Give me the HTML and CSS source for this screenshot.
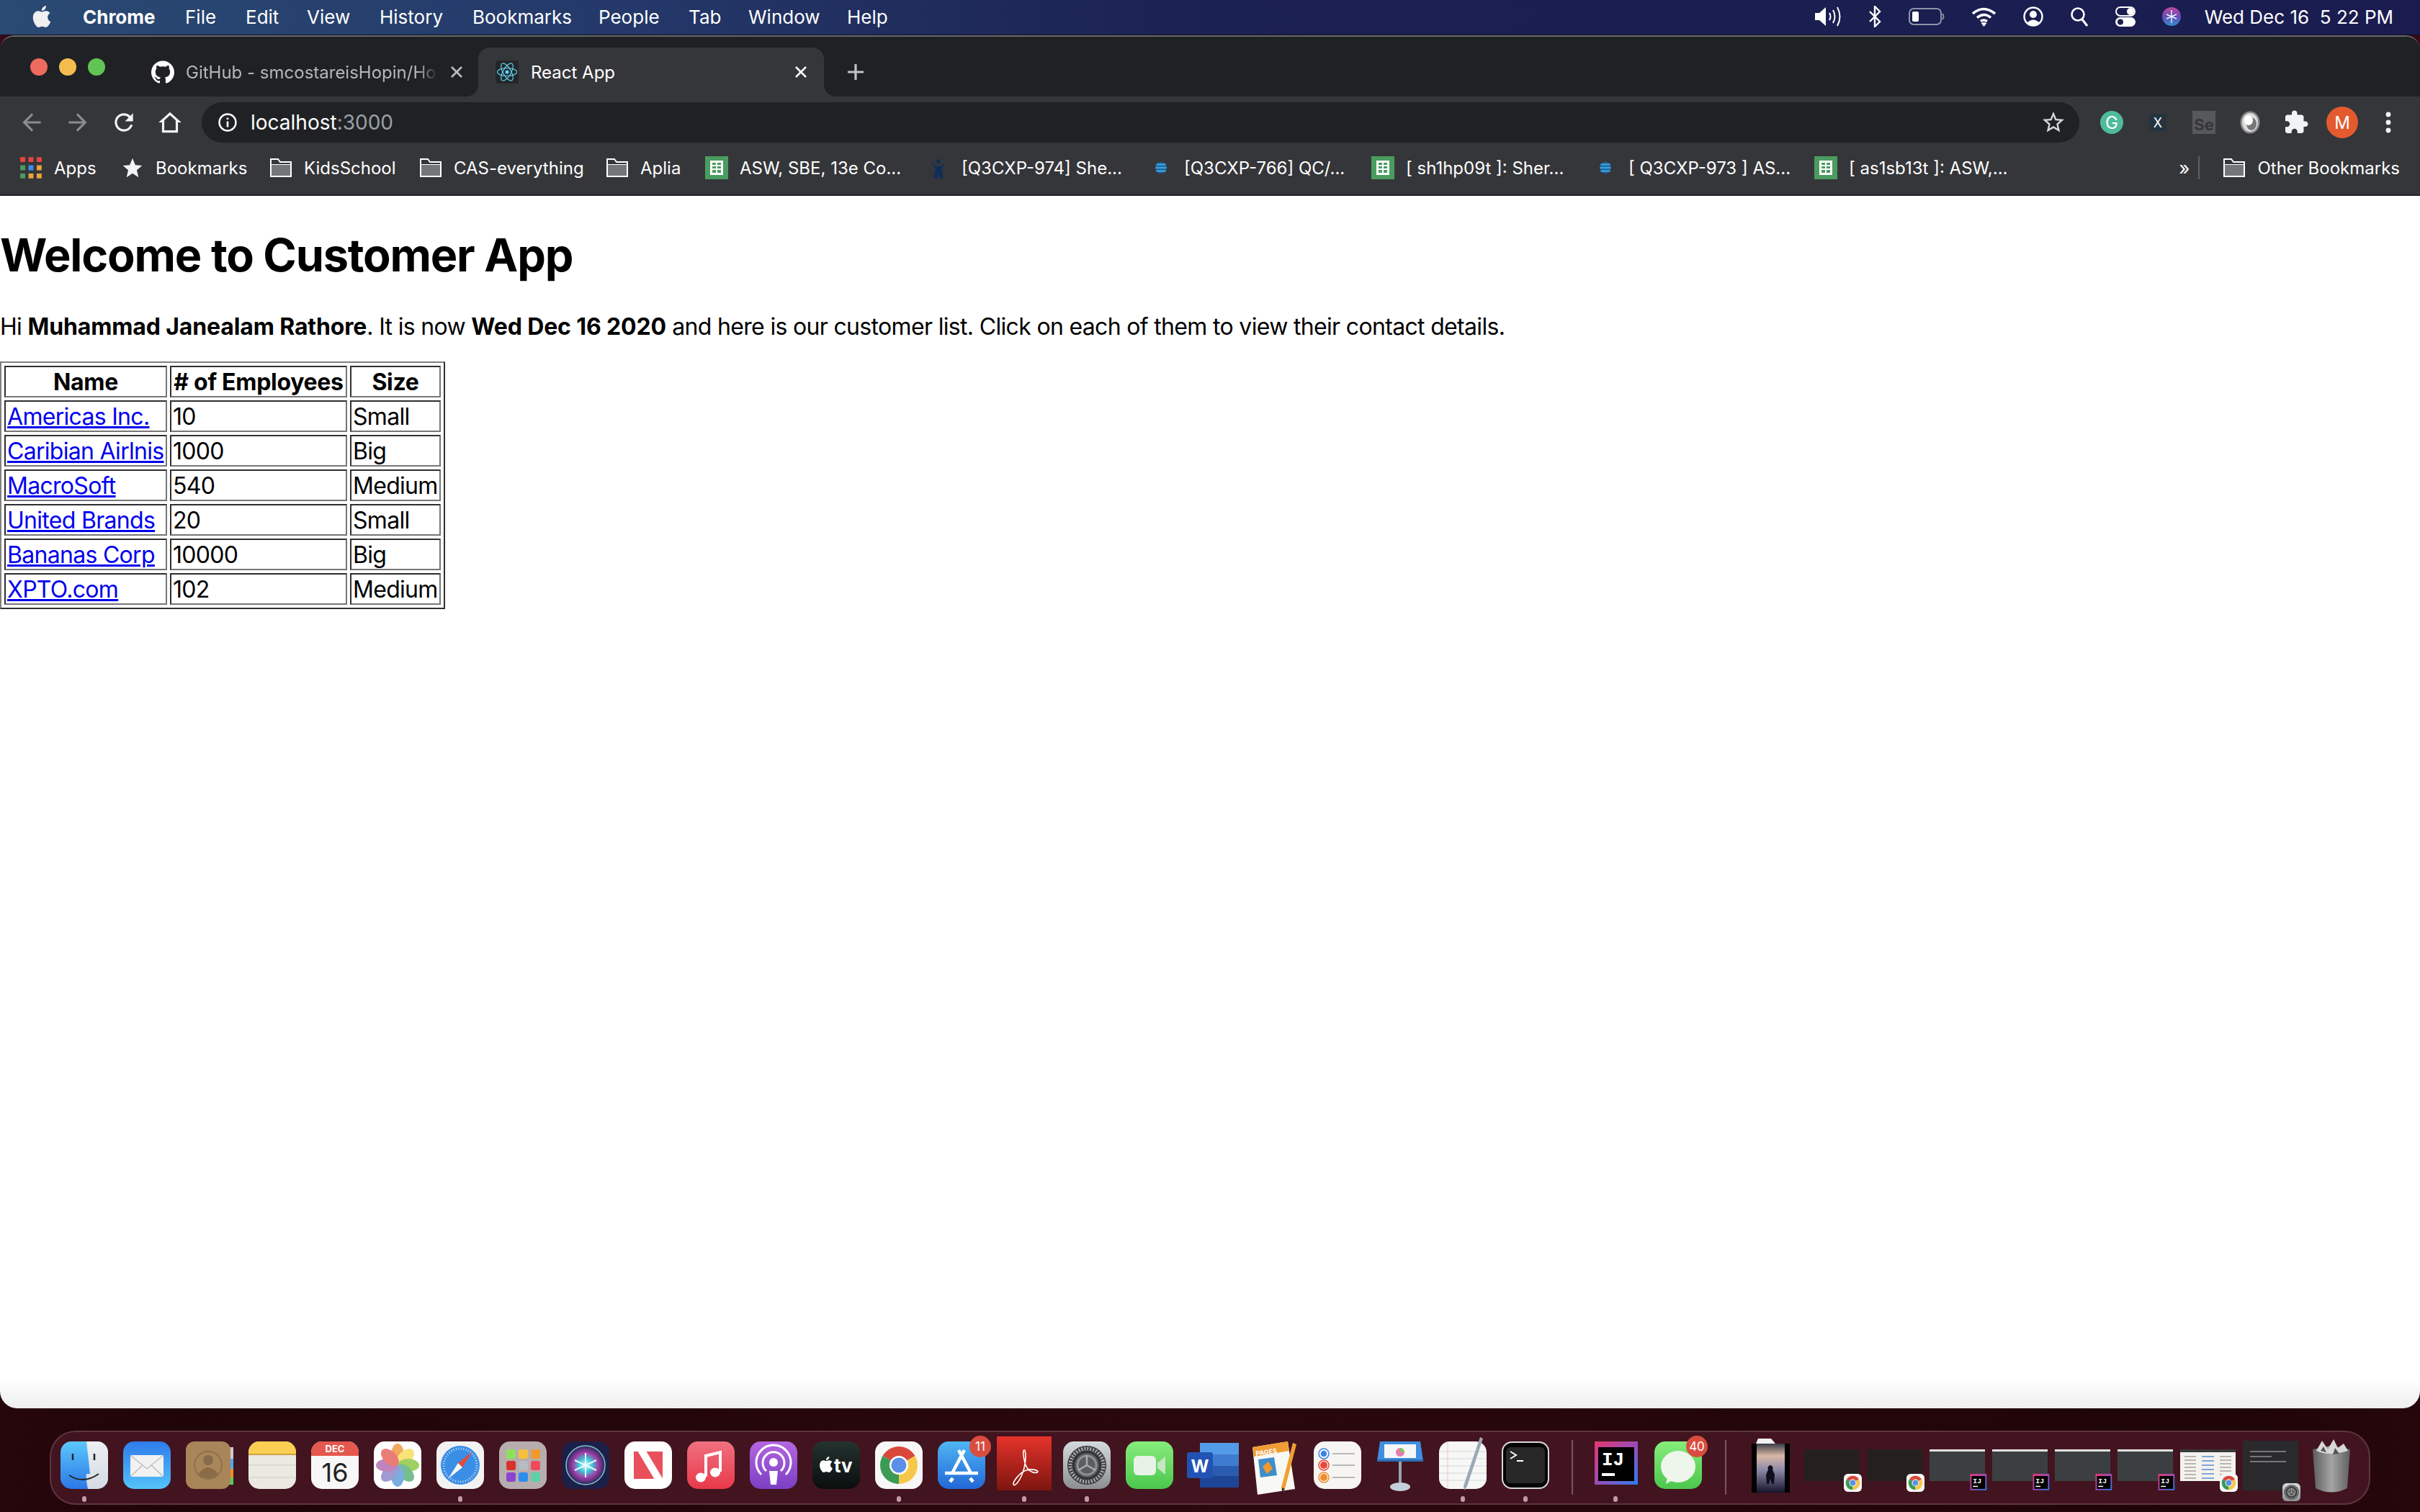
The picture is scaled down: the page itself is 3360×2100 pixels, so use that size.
FILE: index.html
```html
<!DOCTYPE html>
<html lang="en">

<head>
    <meta charset="UTF-8">
    <title>React App</title>
    <link rel="stylesheet" href="styles.css">
</head>

<body>
    <svg class="defs" aria-hidden="true">
        <defs>
            <linearGradient id="gFinder" x1="0" y1="0" x2="0" y2="1"><stop offset="0" stop-color="#5ac8fa"/><stop offset="1" stop-color="#2c78e8"/></linearGradient>
            <linearGradient id="gFinder2" x1="0" y1="0" x2="0" y2="1"><stop offset="0" stop-color="#eef0f3"/><stop offset="1" stop-color="#d4dbe4"/></linearGradient>
            <linearGradient id="gMail" x1="0" y1="0" x2="0" y2="1"><stop offset="0" stop-color="#2f7bea"/><stop offset="1" stop-color="#54c3fa"/></linearGradient>
            <linearGradient id="gMusic" x1="0" y1="0" x2="0" y2="1"><stop offset="0" stop-color="#f0717f"/><stop offset="1" stop-color="#e8394a"/></linearGradient>
            <linearGradient id="gPod" x1="0" y1="0" x2="0" y2="1"><stop offset="0" stop-color="#b566e0"/><stop offset="1" stop-color="#7b3fc4"/></linearGradient>
            <linearGradient id="gStore" x1="0" y1="0" x2="0" y2="1"><stop offset="0" stop-color="#4fb5f3"/><stop offset="1" stop-color="#2268d8"/></linearGradient>
            <linearGradient id="gAcro" x1="0" y1="0" x2="0" y2="1"><stop offset="0" stop-color="#e5332a"/><stop offset="1" stop-color="#7d1510"/></linearGradient>
            <linearGradient id="gPrefs" x1="0" y1="0" x2="0" y2="1"><stop offset="0" stop-color="#d3dade"/><stop offset="1" stop-color="#8b8f92"/></linearGradient>
            <linearGradient id="gFace" x1="0" y1="0" x2="0" y2="1"><stop offset="0" stop-color="#86ec7c"/><stop offset="1" stop-color="#4cc74c"/></linearGradient>
            <linearGradient id="gTv" x1="0" y1="0" x2="0" y2="1"><stop offset="0" stop-color="#253230"/><stop offset="1" stop-color="#0a0e0e"/></linearGradient>
            <linearGradient id="gIj" x1="0" y1="0" x2="1" y2="1"><stop offset="0" stop-color="#e8366f"/><stop offset=".5" stop-color="#9b4bb5"/><stop offset="1" stop-color="#2b7df0"/></linearGradient>
            <linearGradient id="gPoster" x1="0" y1="0" x2="0" y2="1"><stop offset="0" stop-color="#3c3c48"/><stop offset=".25" stop-color="#d9b8a6"/><stop offset=".55" stop-color="#8a86a8"/><stop offset="1" stop-color="#14142a"/></linearGradient>
            <linearGradient id="gTrash" x1="0" y1="0" x2="1" y2="0"><stop offset="0" stop-color="#5c5c5c"/><stop offset=".5" stop-color="#a5a5a5"/><stop offset="1" stop-color="#5f5f5f"/></linearGradient>
            <linearGradient id="gSiriMenu" x1="0" y1="0" x2="0" y2="1"><stop offset="0" stop-color="#c04a9c"/><stop offset=".5" stop-color="#6a4ab8"/><stop offset="1" stop-color="#2f8ed0"/></linearGradient>
            <radialGradient id="gSiri"><stop offset="0" stop-color="#e8fbff"/><stop offset=".35" stop-color="#3bc6d8"/><stop offset=".65" stop-color="#a13ea8"/><stop offset="1" stop-color="#24285a"/></radialGradient>

            <symbol id="i-apple" viewBox="0 0 24 24"><path d="M12.152 6.896c-.948 0-2.415-1.078-3.96-1.04-2.04.027-3.91 1.183-4.961 3.014-2.117 3.675-.546 9.103 1.519 12.09 1.013 1.454 2.208 3.09 3.792 3.039 1.52-.065 2.09-.987 3.935-.987 1.831 0 2.35.987 3.96.948 1.637-.026 2.676-1.48 3.676-2.948 1.156-1.688 1.636-3.325 1.662-3.415-.039-.013-3.182-1.221-3.22-4.857-.026-3.04 2.48-4.494 2.597-4.559-1.429-2.09-3.623-2.324-4.39-2.376-2-.156-3.675 1.09-4.61 1.09zM15.53 3.83c.843-1.012 1.4-2.427 1.245-3.83-1.207.052-2.662.805-3.532 1.818-.78.896-1.454 2.338-1.273 3.714 1.338.104 2.715-.688 3.559-1.701"/></symbol>
            <symbol id="i-folder" viewBox="0 0 32 32"><path d="M2 28V4h10l3 4h15v20z" fill="#75767a"/><path d="M2 11h28" stroke="#fff" stroke-width="2"/><path d="M2 11h28V4H2z" fill="#35363a"/><path d="M2 28V4h10l3 4h15v20z" fill="none" stroke="#fff" stroke-width="2"/></symbol>
            <symbol id="i-sheet" viewBox="0 0 32 32"><rect width="32" height="32" fill="#4a9c5f"/><path d="M7 6h18v20H7z" fill="#fff"/><path d="M10 9h5v3h-5zM17 9h5v3h-5zM10 14h5v3h-5zM17 14h5v3h-5zM10 19h5v4h-5zM17 19h5v4h-5z" fill="#4a9c5f"/></symbol>
            <symbol id="i-att" viewBox="0 0 32 32"><circle cx="16" cy="16" r="8" fill="#1c5f95"/><path d="M9.500 11.500h13M8.500 16h15M9.500 20.500h13" stroke="#3f9fdb" stroke-width="2.400"/></symbol>
            <symbol id="i-x" viewBox="0 0 24 24"><path d="M5 5l14 14M19 5L5 19" stroke="currentColor" stroke-width="2.600" fill="none"/></symbol>
            <symbol id="i-chrome" viewBox="0 0 66 66">
                <rect width="66" height="66" rx="15" fill="#f7f7f7"/>
                <path d="M33 33L10.5 20A26 26 0 0 1 55.500 20z" fill="#d9483b"/>
                <path d="M33 33L10.500 20A26 26 0 0 0 33 59z" fill="#3b9b54"/>
                <path d="M33 33L33 59A26 26 0 0 0 55.500 20z" fill="#f5c84a"/>
                <circle cx="33" cy="33" r="13" fill="#fff"/>
                <circle cx="33" cy="33" r="10.500" fill="#5c8fe8"/>
            </symbol>
            <symbol id="i-ij" viewBox="0 0 66 66">
                <rect x="4" width="60" height="60" fill="url(#gIj)"/>
                <rect x="9" y="8" width="50" height="47" fill="#000"/>
                <text x="14" y="33" class="ij-text">IJ</text>
                <rect x="14" y="44" width="18" height="4" fill="#fff"/>
            </symbol>
            <symbol id="i-prefs" viewBox="0 0 66 66">
                <rect width="66" height="66" rx="15" fill="url(#gPrefs)"/>
                <circle cx="33" cy="33" r="27" fill="#3c3d3f"/>
                <circle cx="33" cy="33" r="23" fill="none" stroke="#a9abad" stroke-width="5" stroke-dasharray="2 2"/>
                <circle cx="33" cy="33" r="18" fill="#5b5d5f" stroke="#2f3032" stroke-width="2"/>
                <circle cx="33" cy="33" r="13" fill="none" stroke="#8f9193" stroke-width="3"/>
                <path d="M33 33V19M33 33L21 40M33 33l12 7" stroke="#a9abad" stroke-width="2.500"/>
            </symbol>
        </defs>
    </svg>

    <header class="menubar">
        <nav class="menu-left">
            <svg class="apple-logo"><use href="#i-apple"/></svg>
            <span class="menu-app">Chrome</span>
            <span>File</span>
            <span>Edit</span>
            <span>View</span>
            <span>History</span>
            <span>Bookmarks</span>
            <span>People</span>
            <span>Tab</span>
            <span>Window</span>
            <span>Help</span>
        </nav>
        <div class="menu-right">
            <svg width="38" height="30" viewBox="0 0 38 30"><path d="M1 10h6l9-8v26l-9-8H1z" fill="#fff"/><path d="M21 10q3 5 0 10M26 6q5 9 0 18M32 2q7 13 0 26" stroke="#fff" stroke-width="2" fill="none"/></svg>
            <svg width="19" height="30" viewBox="0 0 19 30"><path d="M2 8l14 14-7 7V1l7 7L2 22" stroke="#fff" stroke-width="2.400" fill="none"/></svg>
            <svg width="50" height="26" viewBox="0 0 50 26"><rect x="1" y="2" width="44" height="22" rx="6" fill="none" stroke="#8e93a8" stroke-width="2"/><rect x="5" y="6" width="9" height="14" rx="2" fill="#fff"/><path d="M47 9q3 4 0 8" stroke="#8e93a8" stroke-width="2" fill="none"/></svg>
            <svg width="35" height="28" viewBox="0 0 35 28"><path d="M2 10q15-13 31 0M8 15.500q10-8 19 0M13 20.500q4-3 9 0" stroke="#fff" stroke-width="3.600" fill="none"/><path d="M17.500 28l-4-5q4-2 8 0z" fill="#fff"/></svg>
            <svg width="28" height="28" viewBox="0 0 28 28"><circle cx="14" cy="14" r="12.500" fill="none" stroke="#fff" stroke-width="2.400"/><circle cx="14" cy="11" r="5" fill="#fff"/><path d="M5 23q9-9 18 0q-9 7-18 0z" fill="#fff"/></svg>
            <svg width="26" height="28" viewBox="0 0 26 28"><circle cx="11" cy="11" r="8.500" fill="none" stroke="#fff" stroke-width="2.600"/><path d="M17 18l7 9" stroke="#fff" stroke-width="3"/></svg>
            <svg width="28" height="28" viewBox="0 0 28 28"><rect x="1" y="1" width="26" height="12" rx="6" fill="none" stroke="#fff" stroke-width="2"/><circle cx="21" cy="7" r="5" fill="#fff"/><rect y="15" width="28" height="13" rx="6.500" fill="#fff"/><circle cx="7" cy="21.500" r="4" fill="#1b1f50"/></svg>
            <svg width="26" height="30" viewBox="0 0 26 30"><circle cx="13" cy="15" r="13" fill="url(#gSiriMenu)"/><path d="M13 6v18M6 12l14 6M6 18l14-6" stroke="#e6fbff" stroke-width="1.400"/></svg>
            <span class="menu-date">Wed Dec 16  5 22 PM</span>
        </div>
    </header>

    <main class="window">
        <div class="tabstrip">
            <div class="traffic">
                <span class="light light-red"></span>
                <span class="light light-yellow"></span>
                <span class="light light-green"></span>
            </div>
            <div class="tab">
                <svg class="tab-icon tab-icon-white" viewBox="0 0 24 24"><path d="M12 .297c-6.630 0-12 5.373-12 12 0 5.303 3.438 9.800 8.205 11.385.6.113.82-.258.82-.577 0-.285-.01-1.040-.015-2.040-3.338.724-4.042-1.610-4.042-1.610C4.422 18.070 3.633 17.700 3.633 17.700c-1.087-.744.084-.729.084-.729 1.205.084 1.838 1.236 1.838 1.236 1.070 1.835 2.809 1.305 3.495.998.108-.776.417-1.305.76-1.605-2.665-.3-5.466-1.332-5.466-5.930 0-1.310.465-2.380 1.235-3.220-.135-.303-.54-1.523.105-3.176 0 0 1.005-.322 3.300 1.230.96-.267 1.980-.399 3-.405 1.020.006 2.040.138 3 .405 2.280-1.552 3.285-1.230 3.285-1.230.645 1.653.24 2.873.12 3.176.765.84 1.230 1.910 1.230 3.220 0 4.610-2.805 5.625-5.475 5.920.42.36.81 1.096.81 2.220 0 1.606-.015 2.896-.015 3.286 0 .315.21.69.825.57C20.565 22.092 24 17.592 24 12.297c0-6.627-5.373-12-12-12"/></svg>
                <span class="tab-title tab-title-dim">GitHub - smcostareisHopin/Ho</span>
                <svg class="tab-close tab-close-dim"><use href="#i-x"/></svg>
            </div>
            <div class="tab tab-active">
                <svg class="tab-icon" viewBox="0 0 32 32"><rect width="32" height="32" rx="3" fill="#23272a"/><g fill="none" stroke="#61cfef" stroke-width="1.200"><ellipse cx="16" cy="16" rx="13.500" ry="5.500"/><ellipse cx="16" cy="16" rx="13.500" ry="5.500" transform="rotate(60 16 16)"/><ellipse cx="16" cy="16" rx="13.500" ry="5.500" transform="rotate(120 16 16)"/></g><circle cx="16" cy="16" r="2.600" fill="#61cfef"/></svg>
                <span class="tab-title">React App</span>
                <svg class="tab-close"><use href="#i-x"/></svg>
            </div>
            <svg class="tab-new" viewBox="0 0 24 24"><path d="M12 1v22M1 12h22" stroke="#c0c1c4" stroke-width="3.200"/></svg>
        </div>

        <div class="toolbar">
            <div class="tool-btn tool-nav"><svg class="tool-dim" viewBox="0 0 24 24"><path d="M20 11H7.830l5.590-5.590L12 4l-8 8 8 8 1.410-1.410L7.830 13H20v-2z"/></svg></div>
            <div class="tool-btn tool-nav"><svg class="tool-dim tool-flip" viewBox="0 0 24 24"><path d="M20 11H7.830l5.590-5.590L12 4l-8 8 8 8 1.410-1.410L7.830 13H20v-2z"/></svg></div>
            <div class="tool-btn tool-nav"><svg viewBox="0 0 24 24"><path d="M17.650 6.350A7.958 7.958 0 0 0 12 4c-4.420 0-7.990 3.580-7.990 8s3.570 8 7.990 8c3.730 0 6.840-2.550 7.730-6h-2.080A5.990 5.990 0 0 1 12 18c-3.310 0-6-2.690-6-6s2.690-6 6-6c1.660 0 3.140.69 4.220 1.780L13 11h7V4l-2.350 2.350z"/></svg></div>
            <div class="tool-btn tool-nav"><svg viewBox="0 0 24 24"><path d="M12 3L2 12h3v9h14v-9h3L12 3zm5 16H7v-8.800l5-4.500 5 4.500V19z"/></svg></div>
            <div class="omnibox">
                <svg class="omni-info" viewBox="0 0 28 28"><circle cx="14" cy="14" r="11.500" fill="none" stroke="#fff" stroke-width="2.400"/><path d="M12.700 12.500h2.600v8h-2.600zM12.700 7.500h2.600v2.600h-2.600z" fill="#fff"/></svg>
                <span class="omni-url">localhost<span class="omni-port">:3000</span></span>
                <svg class="omni-star" viewBox="0 0 24 24"><path d="M22 9.240l-7.190-.62L12 2 9.190 8.630 2 9.240l5.460 4.730L5.820 21 12 17.270 18.180 21l-1.630-7.030L22 9.240zM12 15.400l-3.760 2.270 1-4.280-3.320-2.880 4.380-.38L12 6.100l1.710 4.040 4.380.38-3.320 2.880 1 4.280L12 15.400z"/></svg>
            </div>
            <div class="tool-btn"><span class="ext-grammarly">G</span></div>
            <div class="tool-btn"><span class="ext-x">X</span></div>
            <div class="tool-btn"><span class="ext-se">Se</span></div>
            <div class="tool-btn"><svg class="ext-lens" viewBox="0 0 28 32"><ellipse cx="14" cy="16" rx="13.500" ry="15.500" fill="#8a8a8a"/><ellipse cx="14" cy="16" rx="11" ry="13" fill="#dcdcdc"/><ellipse cx="16" cy="18" rx="7" ry="9" fill="#777"/><ellipse cx="12" cy="13" rx="6" ry="7" fill="#fff"/></svg></div>
            <div class="tool-btn tool-puzzle"><svg viewBox="0 0 24 24"><path d="M20.500 11H19V7c0-1.100-.9-2-2-2h-4V3.500C13 2.120 11.880 1 10.500 1S8 2.120 8 3.500V5H4c-1.100 0-1.990.9-1.990 2v3.800H3.500c1.490 0 2.700 1.210 2.700 2.700s-1.210 2.700-2.700 2.700H2V20c0 1.100.9 2 2 2h3.800v-1.500c0-1.490 1.210-2.700 2.700-2.700 1.490 0 2.700 1.210 2.700 2.700V22H17c1.100 0 2-.9 2-2v-4h1.500c1.380 0 2.500-1.120 2.500-2.500S21.880 11 20.500 11z"/></svg></div>
            <div class="tool-btn"><span class="avatar">M</span></div>
            <div class="tool-btn"><svg viewBox="0 0 32 32"><circle cx="16" cy="5" r="3.400"/><circle cx="16" cy="16" r="3.400"/><circle cx="16" cy="27" r="3.400"/></svg></div>
        </div>

        <div class="bookmarks">
            <div class="bm">
                <svg class="bm-icon" viewBox="0 0 28 28"><path d="M1 1h6v6H1zM11 1h6v6h-6zM21 1h6v6h-6z" fill="#e8453c"/><path d="M1 11h6v6H1z" fill="#4a9c5f"/><path d="M11 11h6v6h-6z" fill="#3f8cf0"/><path d="M21 11h6v6h-6z" fill="#e8a33c"/><path d="M1 21h6v6H1z" fill="#4a9c5f"/><path d="M11 21h6v6h-6zM21 21h6v6h-6z" fill="#e8a33c"/></svg>
                <span>Apps</span>
            </div>
            <div class="bm">
                <svg class="bm-icon bm-star" viewBox="0 0 24 24"><path d="M12 2l2.900 7.200 7.100.5-5.500 4.700L18.200 22 12 17.900 5.800 22l1.700-7.600L2 9.700l7.100-.5z"/></svg>
                <span>Bookmarks</span>
            </div>
            <div class="bm"><svg class="bm-icon"><use href="#i-folder"/></svg><span>KidsSchool</span></div>
            <div class="bm"><svg class="bm-icon"><use href="#i-folder"/></svg><span>CAS-everything</span></div>
            <div class="bm"><svg class="bm-icon"><use href="#i-folder"/></svg><span>Aplia</span></div>
            <div class="bm"><svg class="bm-icon"><use href="#i-sheet"/></svg><span>ASW, SBE, 13e Co...</span></div>
            <div class="bm">
                <svg class="bm-icon" viewBox="0 0 32 32"><circle cx="16" cy="7" r="3" fill="#0f2d5c"/><path d="M6 9l6 9-3 13h5l2-8 2 8h5l-3-13 6-9-7 5h-6z" fill="#0f2d5c"/></svg>
                <span>[Q3CXP-974] She...</span>
            </div>
            <div class="bm"><svg class="bm-icon"><use href="#i-att"/></svg><span>[Q3CXP-766] QC/...</span></div>
            <div class="bm"><svg class="bm-icon"><use href="#i-sheet"/></svg><span>[ sh1hp09t ]: Sher...</span></div>
            <div class="bm"><svg class="bm-icon"><use href="#i-att"/></svg><span>[ Q3CXP-973 ] AS...</span></div>
            <div class="bm"><svg class="bm-icon"><use href="#i-sheet"/></svg><span>[ as1sb13t ]: ASW,...</span></div>
            <span class="bm-more">»</span>
            <span class="bm-sep"></span>
            <div class="bm"><svg class="bm-icon"><use href="#i-folder"/></svg><span>Other Bookmarks</span></div>
        </div>

        <section class="page">
            <h1>Welcome to Customer App</h1>
            <p>Hi <b>Muhammad Janealam Rathore</b>. It is now <b>Wed Dec 16 2020</b> and here is our customer list. Click on each of them to view their contact details.</p>
            <table class="customers">
                <thead>
                    <tr>
                        <th class="col-name">Name</th>
                        <th class="col-emp"># of Employees</th>
                        <th class="col-size">Size</th>
                    </tr>
                </thead>
                <tbody>
                    <tr><td><a href="#">Americas Inc.</a></td><td>10</td><td>Small</td></tr>
                    <tr><td><a href="#">Caribian Airlnis</a></td><td>1000</td><td>Big</td></tr>
                    <tr><td><a href="#">MacroSoft</a></td><td>540</td><td>Medium</td></tr>
                    <tr><td><a href="#">United Brands</a></td><td>20</td><td>Small</td></tr>
                    <tr><td><a href="#">Bananas Corp</a></td><td>10000</td><td>Big</td></tr>
                    <tr><td><a href="#">XPTO.com</a></td><td>102</td><td>Medium</td></tr>
                </tbody>
            </table>
        </section>
    </main>

    <footer class="dock-area">
        <div class="dock">
            <!-- finder -->
            <div class="app running"><svg viewBox="0 0 66 66"><rect width="66" height="66" rx="15" fill="url(#gFinder)"/><path d="M36 0h15a15 15 0 0 1 15 15v36a15 15 0 0 1-15 15H38q-3-14-2-21h5q-2-20-5-45z" fill="url(#gFinder2)"/><path d="M17 17v9M47 17v9" stroke="#222" stroke-width="2.500"/><path d="M12 47q20 13 41-2" fill="none" stroke="#222" stroke-width="2"/></svg></div>
            <!-- mail -->
            <div class="app"><svg viewBox="0 0 66 66"><rect width="66" height="66" rx="15" fill="url(#gMail)"/><rect x="10" y="19" width="46" height="30" rx="2" fill="#f1f1f1"/><path d="M11 20l22 18 22-18M11 48l16-15M55 48L39 33" fill="none" stroke="#b8b8b8" stroke-width="1.200"/></svg></div>
            <!-- contacts -->
            <div class="app"><svg viewBox="0 0 66 66"><rect x="58" y="8" width="8" height="16" fill="#ccc"/><rect x="58" y="24" width="8" height="14" fill="#54a8ef"/><rect x="58" y="38" width="8" height="12" fill="#ef8f2c"/><rect x="58" y="50" width="8" height="10" fill="#5cc85c"/><rect width="62" height="66" rx="12" fill="#a9855a"/><circle cx="31" cy="33" r="19" fill="none" stroke="#8a6b47" stroke-width="1.500"/><circle cx="31" cy="26" r="7" fill="#8a6b47"/><path d="M17 46q14-20 28 0q-14 10-28 0z" fill="#8a6b47"/></svg></div>
            <!-- notes -->
            <div class="app"><svg viewBox="0 0 66 66"><rect width="66" height="66" rx="15" fill="#ece9e3"/><path d="M0 17V15A15 15 0 0 1 15 0h36a15 15 0 0 1 15 15v2z" fill="#fbcf52"/><rect y="17" width="66" height="2" fill="#c9a43f"/><path d="M0 33h66M0 50h66" stroke="#d8d5cf" stroke-width="1.500"/></svg></div>
            <!-- calendar -->
            <div class="app"><svg viewBox="0 0 66 66"><rect width="66" height="66" rx="15" fill="#f7f7f7"/><path d="M0 20V15A15 15 0 0 1 15 0h36a15 15 0 0 1 15 15v5z" fill="#e5584e"/><text x="33" y="15" class="cal-month">DEC</text><text x="33" y="56" class="cal-day">16</text></svg></div>
            <!-- photos -->
            <div class="app"><svg viewBox="0 0 66 66"><rect width="66" height="66" rx="15" fill="#fff"/><g opacity=".82"><ellipse cx="33" cy="18" rx="9" ry="15" fill="#f0963c"/><ellipse cx="33" cy="18" rx="9" ry="15" fill="#f7dd5c" transform="rotate(45 33 33)"/><ellipse cx="33" cy="18" rx="9" ry="15" fill="#8cc63f" transform="rotate(90 33 33)"/><ellipse cx="33" cy="18" rx="9" ry="15" fill="#5aaf78" transform="rotate(135 33 33)"/><ellipse cx="33" cy="18" rx="9" ry="15" fill="#5c9ed8" transform="rotate(180 33 33)"/><ellipse cx="33" cy="18" rx="9" ry="15" fill="#8a86c8" transform="rotate(225 33 33)"/><ellipse cx="33" cy="18" rx="9" ry="15" fill="#b36ab0" transform="rotate(270 33 33)"/><ellipse cx="33" cy="18" rx="9" ry="15" fill="#e5605a" transform="rotate(315 33 33)"/></g></svg></div>
            <!-- safari -->
            <div class="app running"><svg viewBox="0 0 66 66"><rect width="66" height="66" rx="15" fill="#f2f2f2"/><circle cx="33" cy="33" r="27" fill="#3a8ee6"/><circle cx="33" cy="33" r="23" fill="none" stroke="#cfe4f8" stroke-width="3" stroke-dasharray="1 2.500"/><path d="M50 14L36 36 30 30z" fill="#e8483c"/><path d="M16 52L30 30l6 6z" fill="#f5f5f5"/></svg></div>
            <!-- launchpad -->
            <div class="app"><svg viewBox="0 0 66 66"><rect width="66" height="66" rx="15" fill="#b8adad"/><rect x="10" y="11" width="13" height="13" rx="3" fill="#8ce05c"/><rect x="27" y="11" width="13" height="13" rx="3" fill="#f5c13c"/><rect x="44" y="11" width="13" height="13" rx="3" fill="#ef9a2c"/><rect x="10" y="27" width="13" height="13" rx="3" fill="#d6332c"/><rect x="27" y="27" width="13" height="13" rx="3" fill="#b5bcc2"/><rect x="44" y="27" width="13" height="13" rx="3" fill="#ee4a5c"/><rect x="10" y="43" width="13" height="13" rx="3" fill="#8a44d0"/><rect x="27" y="43" width="13" height="13" rx="3" fill="#2c8cf0"/><rect x="44" y="43" width="13" height="13" rx="3" fill="#5ed0a8"/></svg></div>
            <!-- siri -->
            <div class="app"><svg viewBox="0 0 66 66"><rect width="66" height="66" rx="15" fill="#1c1f48"/><circle cx="33" cy="33" r="27" fill="url(#gSiri)" stroke="#7fc4c8" stroke-width="1.500"/><path d="M33 16v34M18 26l30 14M18 40l30-14" stroke="#e8fbff" stroke-width="2"/></svg></div>
            <!-- news -->
            <div class="app"><svg viewBox="0 0 66 66"><rect width="66" height="66" rx="15" fill="#fff"/><path d="M13 14h40v38H13z" fill="#e8505c"/><path d="M18 13h12l24 40H42z" fill="#fff"/></svg></div>
            <!-- music -->
            <div class="app"><svg viewBox="0 0 66 66"><rect width="66" height="66" rx="15" fill="url(#gMusic)"/><path d="M26 20l20-5v27" fill="none" stroke="#fff" stroke-width="4"/><path d="M26 18v31" stroke="#fff" stroke-width="4"/><ellipse cx="19" cy="50" rx="7" ry="6.500" fill="#fff"/><ellipse cx="39" cy="43" rx="7" ry="6.500" fill="#fff"/></svg></div>
            <!-- podcasts -->
            <div class="app"><svg viewBox="0 0 66 66"><rect width="66" height="66" rx="15" fill="url(#gPod)"/><g fill="none" stroke="#fff" stroke-width="3"><path d="M16 46a24 24 0 1 1 34 0"/><path d="M23 41a15 15 0 1 1 20 0"/></g><circle cx="33" cy="29" r="6" fill="#fff"/><path d="M27 41h12l-2 19h-8z" fill="#fff"/></svg></div>
            <!-- tv -->
            <div class="app"><svg viewBox="0 0 66 66"><rect width="66" height="66" rx="15" fill="url(#gTv)"/><use href="#i-apple" x="8" y="21" width="22" height="22" fill="#fff"/><text x="30" y="43" class="tv-text">tv</text></svg></div>
            <!-- chrome -->
            <div class="app running"><svg viewBox="0 0 66 66"><use href="#i-chrome"/></svg></div>
            <!-- app store -->
            <div class="app"><svg viewBox="0 0 66 66"><rect width="66" height="66" rx="15" fill="url(#gStore)"/><path d="M37 12L20 44M29 12l17 32M10 44h46M21 51l-4 5M45 51l4 5" stroke="#fff" stroke-width="4.500" fill="none"/></svg><span class="badge">11</span></div>
            <!-- acrobat -->
            <div class="app running"><svg viewBox="0 0 66 66"><rect x="-5" y="-7" width="76" height="75" fill="url(#gAcro)"/><path d="M33 12c-3 0 0 17 3 23s11 10 15 8-6-6-15-3-18 15-18 19 6 1 12-13 6-34 3-34z" fill="none" stroke="#fff" stroke-width="1.600"/></svg></div>
            <!-- system prefs -->
            <div class="app running"><svg viewBox="0 0 66 66"><use href="#i-prefs"/></svg></div>
            <!-- facetime -->
            <div class="app"><svg viewBox="0 0 66 66"><rect width="66" height="66" rx="15" fill="url(#gFace)"/><rect x="11" y="20" width="31" height="27" rx="6" fill="#e8f2e6"/><path d="M44 30l11-9v25l-11-9z" fill="#c8e6c4"/></svg></div>
            <!-- word -->
            <div class="app"><svg viewBox="0 0 66 66"><rect x="16" y="2" width="54" height="62" rx="3" fill="#2b5cb0"/><rect x="16" y="2" width="54" height="16" fill="#539be8"/><rect x="16" y="18" width="54" height="16" fill="#3f7cd0"/><rect x="16" y="48" width="54" height="16" fill="#1d4596"/><rect x="-2" y="15" width="36" height="36" rx="3" fill="#2253b4"/><text x="16" y="43" class="word-text">W</text></svg></div>
            <!-- pages -->
            <div class="app"><svg viewBox="0 0 66 66"><path d="M2 8l49-8 10 66-52 8z" fill="#f8f8f4"/><path d="M2 8l49-8 2 13-49 8z" fill="#ef9d34"/><text x="7" y="20" class="pages-text" transform="rotate(-8 7 20)">PAGES</text><path d="M10 25l22-3 4 25-23 3z" fill="#3f8ec8"/><path d="M24 28l6 10-8 7-6-10z" fill="#f29a2e"/><path d="M58 2l5 2-16 62-4 4-1-6z" fill="#f0a030"/><path d="M43 64l4 2-4 5z" fill="#333"/></svg></div>
            <!-- reminders -->
            <div class="app"><svg viewBox="0 0 66 66"><rect width="66" height="66" rx="15" fill="#f7f5f1"/><circle cx="14" cy="17" r="5" fill="#3b82e8" stroke="#fff" stroke-width="1.500"/><circle cx="14" cy="17" r="7" fill="none" stroke="#3b82e8" stroke-width="1.500"/><circle cx="14" cy="33" r="5" fill="#e8483c"/><circle cx="14" cy="33" r="7" fill="none" stroke="#e8483c" stroke-width="1.500"/><circle cx="14" cy="50" r="5" fill="#ef8f2c"/><circle cx="14" cy="50" r="7" fill="none" stroke="#ef8f2c" stroke-width="1.500"/><path d="M26 17h31M26 33h31M26 50h31" stroke="#b9b9b9" stroke-width="2"/></svg></div>
            <!-- keynote -->
            <div class="app"><svg viewBox="0 0 66 66"><path d="M5 0h56l4 27H1z" fill="#3f8ee0"/><rect x="1" y="25" width="64" height="3" fill="#2d6cb4"/><rect x="11" y="4" width="44" height="19" fill="#f4f6f8"/><circle cx="33" cy="15" r="6" fill="#e87ab0"/><path d="M33 15V9a6 6 0 0 1 6 6z" fill="#7ac85c"/><rect x="31" y="28" width="4" height="30" fill="#9aa4ae"/><ellipse cx="33" cy="63" rx="14" ry="6" fill="#c3d0dc"/></svg></div>
            <!-- textedit -->
            <div class="app running"><svg viewBox="0 0 66 66"><rect width="66" height="66" rx="15" fill="#f7f7f5"/><path d="M0 14h66M0 24h66M0 34h66M0 44h66M0 54h66" stroke="#d3d8e0" stroke-width="1.200"/><path d="M12 0v66" stroke="#ecc8c8" stroke-width="1"/><path d="M57-6l4 2-22 66-4 6-1-6z" fill="#9ba7b6"/></svg></div>
            <!-- terminal -->
            <div class="app running"><svg viewBox="0 0 66 66"><rect width="66" height="66" rx="14" fill="#d8d8d8"/><rect x="2" y="2" width="62" height="62" rx="12" fill="#050505"/><rect x="6" y="8" width="54" height="50" rx="6" fill="#282828"/><path d="M12 14l8 5-8 5" fill="none" stroke="#fff" stroke-width="2"/><path d="M21 27h9" stroke="#fff" stroke-width="2"/></svg></div>

            <span class="dock-sep dock-sep-first"></span>

            <div class="app running"><svg viewBox="0 0 66 66"><use href="#i-ij"/></svg></div>
            <div class="app"><svg viewBox="0 0 66 66"><rect width="66" height="66" rx="15" fill="url(#gFace)"/><ellipse cx="33" cy="35" rx="24" ry="22" fill="#eef6ec"/><path d="M18 50l-2 9 11-6z" fill="#eef6ec"/></svg><span class="badge">40</span></div>

            <span class="dock-sep dock-sep-last"></span>

            <div class="thumbs">
                <svg class="thumb-poster" viewBox="0 0 53 76"><path d="M6 8l3-7h18l6 7z" fill="#f1f1f1"/><rect y="8" width="53" height="68" fill="#000"/><rect x="7" y="8" width="39" height="68" fill="url(#gPoster)"/><path d="M26 38a4 4 0 0 1 3 6l3 7-1 13h-3l-2-7-2 7h-3l-1-13 3-7a4 4 0 0 1 3-6z" fill="#0e0e1c"/></svg>
                <div class="thumb thumb-dark"><svg class="thumb-badge"><use href="#i-chrome"/></svg></div>
                <div class="thumb thumb-dark"><svg class="thumb-badge"><use href="#i-chrome"/></svg></div>
                <div class="thumb thumb-ide"><svg class="thumb-badge"><use href="#i-ij"/></svg></div>
                <div class="thumb thumb-ide"><svg class="thumb-badge"><use href="#i-ij"/></svg></div>
                <div class="thumb thumb-ide"><svg class="thumb-badge"><use href="#i-ij"/></svg></div>
                <div class="thumb thumb-ide"><svg class="thumb-badge"><use href="#i-ij"/></svg></div>
                <div class="thumb thumb-web">
                    <span class="web-col"></span>
                    <span class="web-col web-col-blue"></span>
                    <span class="web-col"></span>
                    <svg class="thumb-badge"><use href="#i-chrome"/></svg>
                </div>
                <div class="thumb thumb-prefs">
                    <span class="prefs-line"></span>
                    <span class="prefs-line prefs-line-short"></span>
                    <span class="prefs-line"></span>
                    <svg class="thumb-badge"><use href="#i-prefs"/></svg>
                </div>
            </div>

            <svg class="trash" viewBox="0 0 58 76"><path d="M3 16l25-5 27 5-4 54q-22 11-44 0z" fill="url(#gTrash)"/><path d="M8 18l8-14 8 12 8-14 6 12 8-6 6 10q-26 8-44 0z" fill="#d8d8d8"/><path d="M14 18l4-6 4 8zM34 14l6 8-9 1z" fill="#555"/></svg>
        </div>
    </footer>
</body>

</html>
```

FILE: styles.css
```css
* {
    box-sizing: border-box;
}

html,
body {
    width: 3360px;
    height: 2100px;
    margin: 0;
    padding: 0;
    overflow: hidden;
}

body {
    display: flex;
    flex-direction: column;
    font-family: Inter, "Liberation Sans", sans-serif;
    background: radial-gradient(ellipse at 50% 100%, #2a080d 0%, #1f0508 60%, #3a0a16 100%);
}

.defs {
    position: absolute;
    width: 0;
    height: 0;
}

.ij-text {
    font: 700 26px "Liberation Mono", monospace;
    fill: #fff;
}

/* menu bar */
.menubar {
    flex: none;
    display: flex;
    justify-content: space-between;
    align-items: center;
    height: 49px;
    padding: 0 37px 2px 43px;
    color: #fff;
    font-size: 26px;
    background: linear-gradient(90deg, #2a4a73 0%, #24396a 25%, #1b2150 50%, #1a1c50 100%);
    border-bottom: 1px solid #0d0f1e;
}

.menu-left {
    display: grid;
    grid-template-columns: 72px 142px 84px 85px 101px 129px 175px 125px 83px 137px auto;
    align-items: center;
}

.apple-logo {
    width: 30px;
    height: 32px;
    fill: #f0f0f0;
}

.menu-app {
    font-weight: 700;
}

.menu-right {
    display: flex;
    align-items: center;
    gap: 37px;
}

.menu-date {
    margin-left: -4px;
    white-space: pre;
}

/* browser window */
.window {
    flex: 1;
    display: flex;
    flex-direction: column;
    overflow: hidden;
    border-radius: 20px 20px 24px 24px;
    border-top: 2px solid #6a6a6a;
    background: #202124;
}

.tabstrip {
    flex: none;
    display: flex;
    align-items: flex-end;
    height: 83px;
    padding-left: 42px;
    background: #202124;
}

.traffic {
    align-self: flex-start;
    display: flex;
    gap: 16px;
    margin-top: 30px;
    margin-right: 40px;
}

.light {
    width: 24px;
    height: 24px;
    border-radius: 50%;
}

.light-red {
    background: #ee6a5f;
}

.light-yellow {
    background: #f5bd4f;
}

.light-green {
    background: #61c454;
}

.tab {
    position: relative;
    display: flex;
    align-items: center;
    width: 478px;
    height: 68px;
    padding: 0 18px 0 24px;
    font-size: 24px;
    color: #fff;
}

.tab-active {
    width: 480px;
    padding-right: 20px;
    border-radius: 16px 16px 0 0;
    background: #35363a;
}

.tab-active::before,
.tab-active::after {
    content: "";
    position: absolute;
    bottom: 0;
    width: 16px;
    height: 16px;
}

.tab-active::before {
    left: -16px;
    background: radial-gradient(circle at 0 0, #202124 15.500px, #35363a 16px);
}

.tab-active::after {
    right: -16px;
    background: radial-gradient(circle at 100% 0, #202124 15.500px, #35363a 16px);
}

.tab-icon {
    flex: none;
    width: 32px;
    height: 32px;
    margin-right: 17px;
}

.tab-icon-white {
    fill: #fff;
    margin-right: 16px;
}

.tab-title {
    flex: 1;
    overflow: hidden;
    white-space: nowrap;
}

.tab-title-dim {
    color: #b5b6b9;
    -webkit-mask-image: linear-gradient(90deg, #000 92%, transparent 100%);
    mask-image: linear-gradient(90deg, #000 92%, transparent 100%);
}

.tab-close {
    flex: none;
    width: 24px;
    height: 24px;
    margin-left: 14px;
    color: #fff;
}

.tab-close-dim {
    color: #bdbec1;
}

.tab-new {
    flex: none;
    width: 24px;
    height: 24px;
    margin: 0 0 22px 32px;
}

.toolbar {
    flex: none;
    display: flex;
    align-items: center;
    height: 70px;
    padding: 2px 12px 0;
    background: #35363a;
}

.tool-btn {
    flex: none;
    display: flex;
    justify-content: center;
    align-items: center;
    width: 64px;
    height: 56px;
}

.tool-btn svg {
    width: 32px;
    height: 32px;
    fill: #f1f3f4;
}

.tool-nav svg {
    width: 38px;
    height: 38px;
}

.tool-puzzle svg {
    width: 36px;
    height: 36px;
}

.tool-btn .tool-dim {
    fill: #8b8c8f;
}

.tool-flip {
    transform: scaleX(-1);
}

.omnibox {
    flex: 1;
    display: flex;
    align-items: center;
    height: 56px;
    margin: 0 13px 0 12px;
    padding: 0 18px 0 22px;
    border-radius: 28px;
    background: #202124;
}

.omni-info {
    flex: none;
    width: 28px;
    height: 28px;
    margin-right: 18px;
}

.omni-url {
    flex: 1;
    font-size: 28px;
    color: #fff;
}

.omni-port {
    color: #9aa0a6;
}

.omni-star {
    flex: none;
    width: 36px;
    height: 36px;
    fill: #d5d6d8;
}

.ext-grammarly {
    display: flex;
    justify-content: center;
    align-items: center;
    width: 32px;
    height: 32px;
    border-radius: 50%;
    font-size: 24px;
    color: #fff;
    background: #4fbb9b;
}

.ext-x {
    display: flex;
    justify-content: center;
    align-items: center;
    width: 24px;
    height: 24px;
    border-radius: 3px;
    font-size: 18px;
    color: #fff;
    background: #24343f;
}

.ext-se {
    display: flex;
    justify-content: center;
    align-items: flex-end;
    width: 32px;
    height: 32px;
    font-size: 22px;
    font-weight: 700;
    line-height: 26px;
    color: #35363a;
    background: #57585a;
}

.tool-btn .ext-lens {
    width: 28px;
}

.avatar {
    display: flex;
    justify-content: center;
    align-items: center;
    width: 44px;
    height: 44px;
    border-radius: 50%;
    font-size: 24px;
    color: #fff;
    background: #e45a2f;
}

/* bookmarks bar, tracks follow the item starts */
.bookmarks {
    flex: none;
    display: grid;
    grid-template-columns: 141px 206px 208px 259px 138px 308px 309px 308px 309px 306px 1fr 29px 34px auto;
    align-items: center;
    height: 68px;
    padding: 0 28px 8px 27px;
    border-bottom: 2px solid #202124;
    font-size: 24px;
    color: #fff;
    background: #35363a;
}

.bm {
    display: flex;
    align-items: center;
    gap: 16px;
    white-space: nowrap;
}

.bm-icon {
    flex: none;
    width: 32px;
    height: 32px;
}

.bm-star {
    fill: #f1f3f4;
}

.bm-more {
    justify-self: end;
    padding-right: 12px;
    font-size: 26px;
}

.bm-sep {
    width: 2px;
    height: 32px;
    background: #5f6064;
}

/* page content */
.page {
    flex: 1;
    padding: 43px 0 0;
    color: #000;
    font-size: 32px;
    line-height: 38px;
    letter-spacing: -0.67px;
    background: linear-gradient(180deg, #fff 97.500%, #eeeeee 100%);
}

.page h1 {
    margin: 0 0 42px;
    font-size: 63px;
    line-height: 78px;
    font-weight: 700;
    letter-spacing: -1.2px;
}

.page p {
    margin: 0 0 29px;
}

.page b {
    letter-spacing: -0.14px;
}

.customers {
    table-layout: fixed;
    width: 618px;
    border-collapse: separate;
    border-spacing: 4px;
    border: 2px solid;
    border-color: #808080 #2f2f2f #2f2f2f #808080;
    font-size: 32px;
    line-height: 36px;
}

.customers th,
.customers td {
    padding: 3px 2px 1px;
    border: 2px solid;
    border-color: #2f2f2f #767676 #767676 #2f2f2f;
    text-align: left;
    white-space: nowrap;
    letter-spacing: -0.7px;
}

.customers th {
    text-align: center;
    letter-spacing: -0.3px;
}

.col-name {
    width: 226px;
}

.col-emp {
    width: 246px;
}

.col-size {
    width: 126px;
}

.customers a {
    color: #0000ee;
}

/* dock */
.dock-area {
    flex: none;
    height: 144px;
    padding: 31px 0 0 69px;
}

.dock {
    display: flex;
    align-items: flex-start;
    gap: 21px;
    width: 3222px;
    height: 103px;
    padding: 13px 0 0 13px;
    border: 2px solid #5d3540;
    border-radius: 36px;
    background: #42141f;
}

.app {
    position: relative;
    flex: none;
    width: 66px;
    height: 66px;
}

.app svg {
    display: block;
    width: 66px;
    height: 66px;
    overflow: visible;
}

.running::after {
    content: "";
    position: absolute;
    left: 30px;
    top: 76px;
    width: 6px;
    height: 8px;
    border-radius: 3px;
    background: #c59aa7;
}

.badge {
    position: absolute;
    top: -8px;
    right: -8px;
    display: flex;
    justify-content: center;
    align-items: center;
    width: 30px;
    height: 30px;
    border-radius: 50%;
    font-size: 17px;
    color: #fff;
    background: #d94c3f;
}

.cal-month {
    font: 700 13px Inter, sans-serif;
    fill: #fff;
    text-anchor: middle;
}

.cal-day {
    font: 400 36px Inter, sans-serif;
    fill: #222;
    text-anchor: middle;
}

.tv-text {
    font: 700 26px Inter, sans-serif;
    fill: #fff;
}

.word-text {
    font: 700 24px Inter, sans-serif;
    fill: #fff;
    text-anchor: middle;
}

.pages-text {
    font: 700 9px Inter, sans-serif;
    fill: #fff;
}

.dock-sep {
    flex: none;
    width: 2px;
    height: 76px;
    margin-top: -2px;
    background: #7a5560;
}

.dock-sep-first {
    margin-left: 10px;
    margin-right: 5px;
}

.dock-sep-last {
    margin-left: 11px;
    margin-right: 14px;
}

.thumbs {
    flex: none;
    display: flex;
    align-items: flex-start;
    gap: 10px;
    margin-top: -5px;
}

.thumb-poster {
    flex: none;
    width: 53px;
    height: 76px;
    margin-right: 10px;
}

.thumb {
    position: relative;
    flex: none;
    width: 77px;
    height: 44px;
    margin-top: 16px;
}

.thumb-dark {
    background: #25201f;
}

.thumb-ide {
    border-top: 3px solid #e2e2e2;
    background: #3c3f41;
}

.thumb-web {
    display: flex;
    gap: 8px;
    padding: 5px 6px 3px;
    border-top: 4px solid #3a3a3a;
    background: #f4f2ee;
}

.web-col {
    flex: 1;
    background: repeating-linear-gradient(180deg, #b9b6ad 0 2px, #f4f2ee 2px 5px);
}

.web-col-blue {
    background: repeating-linear-gradient(180deg, #7fa6d8 0 2px, #f4f2ee 2px 6px);
}

.thumb-prefs {
    display: flex;
    flex-direction: column;
    gap: 5px;
    height: 69px;
    margin-top: 4px;
    padding: 14px 10px;
    background: #2a2a2c;
}

.prefs-line {
    height: 2px;
    width: 50px;
    background: #77777a;
}

.prefs-line-short {
    width: 30px;
}

.thumb-badge {
    position: absolute;
    right: -3px;
    bottom: -15px;
    width: 25px;
    height: 25px;
}

.trash {
    flex: none;
    width: 58px;
    height: 76px;
    margin-top: -5px;
    margin-left: -4px;
}
```
